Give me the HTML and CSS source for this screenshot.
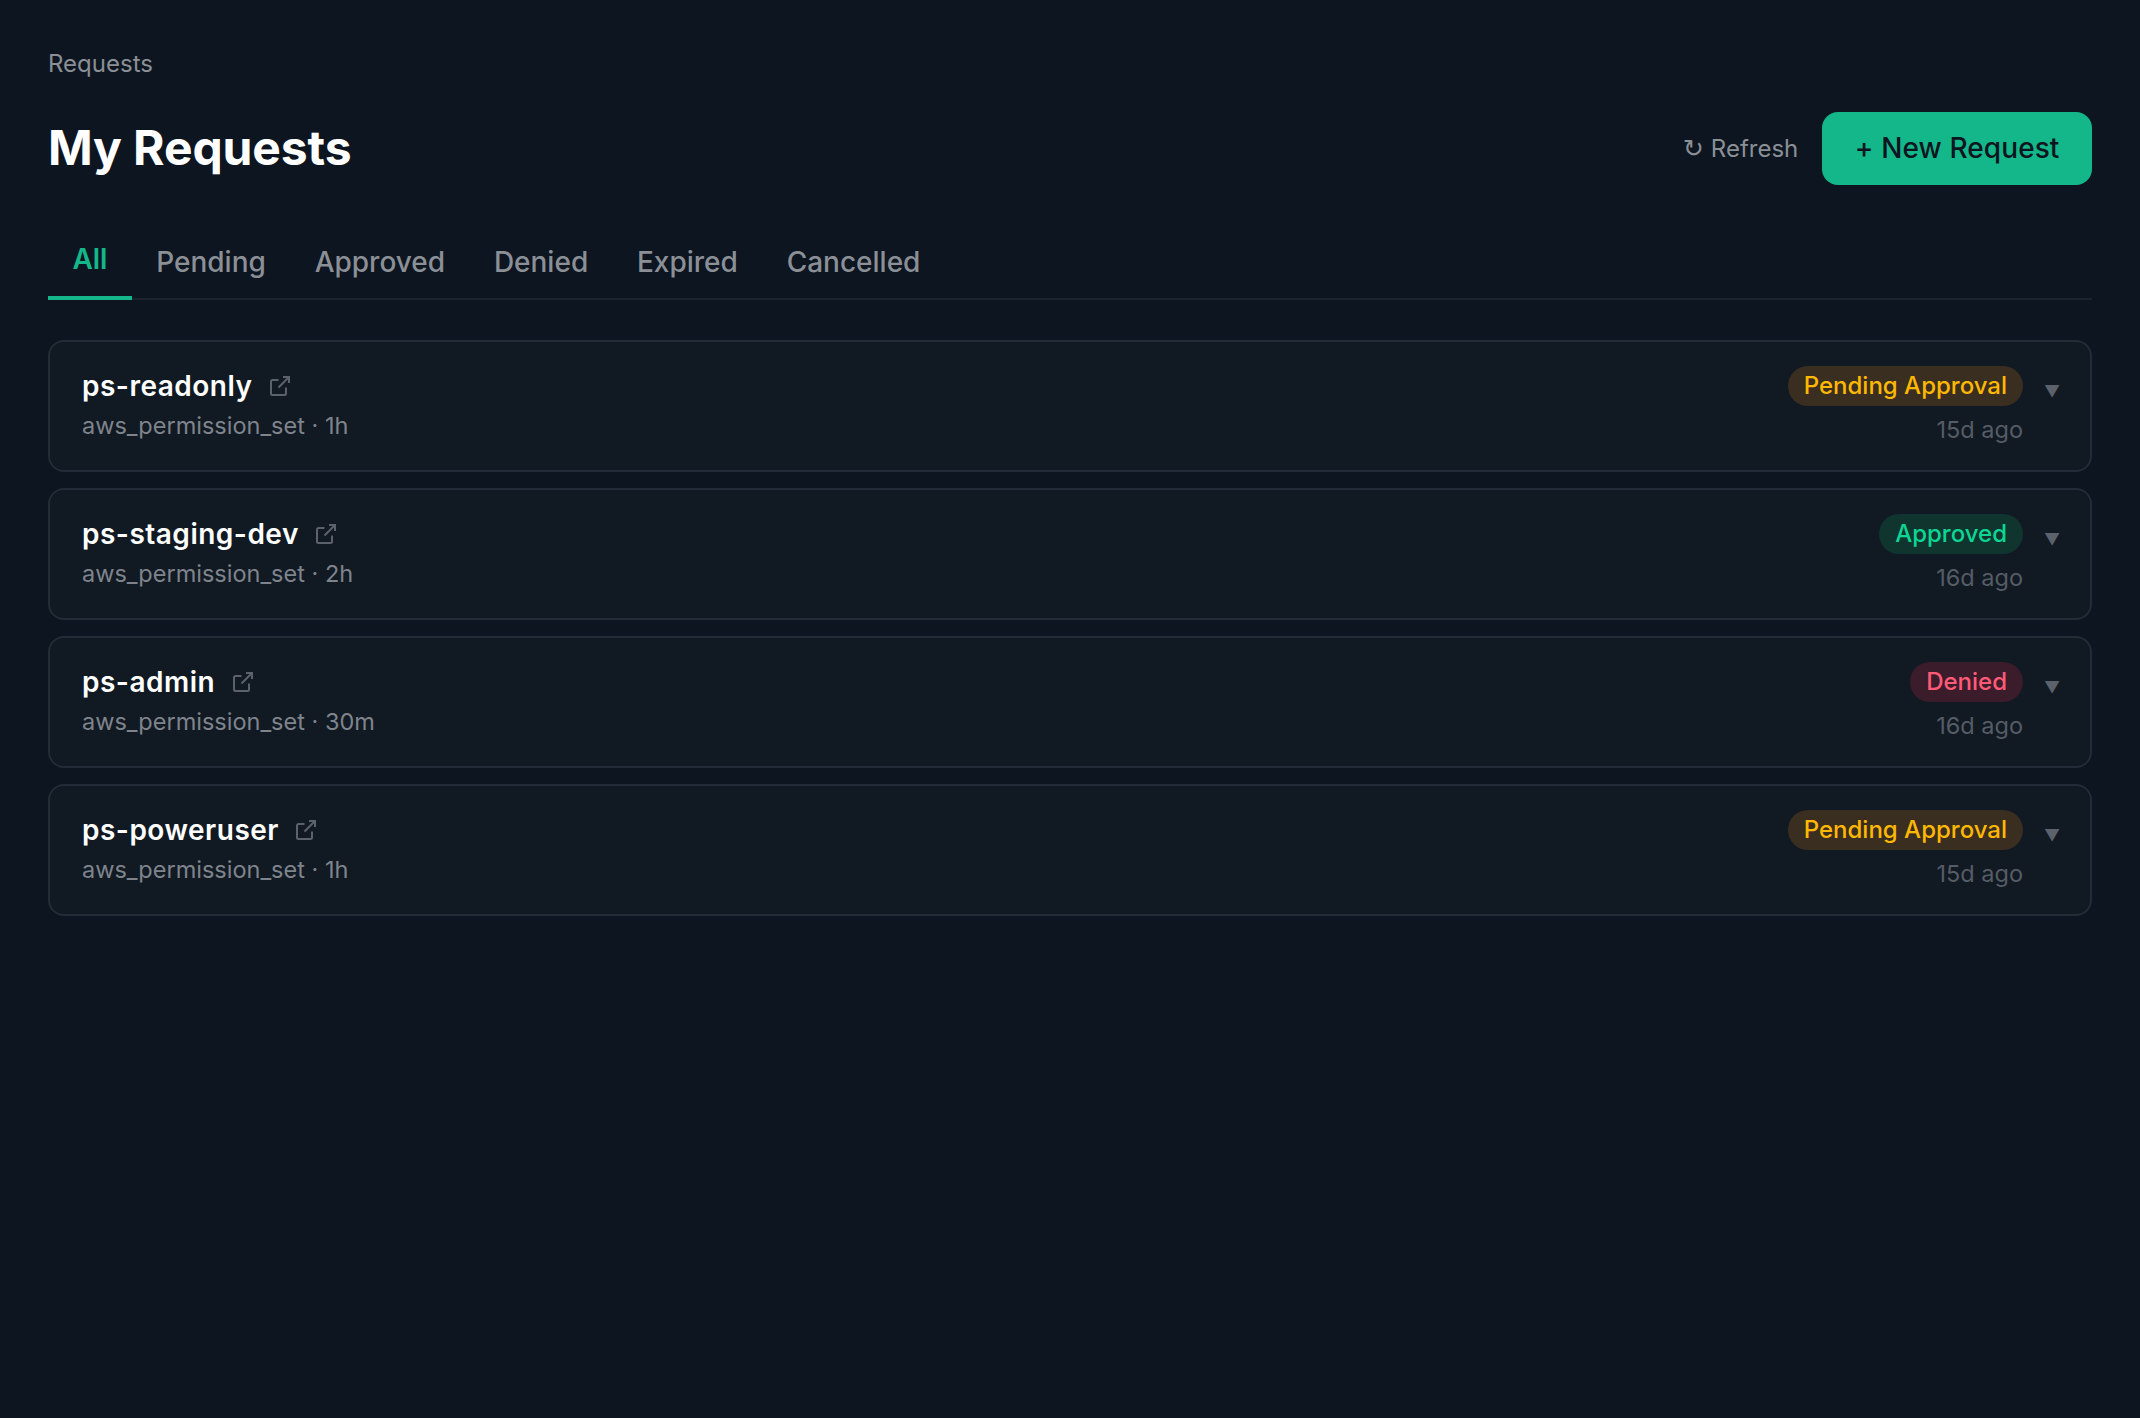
FILE: index.html
```html
<!DOCTYPE html>
<html>
<head>
<meta charset="utf-8" />
<title>My Requests</title>
<link rel="stylesheet" href="styles.css">
</head>
<body>
<div class="page">
    <div class="crumb">Requests</div>
    <div class="head">
        <h1>My Requests</h1>
        <div class="actions">
            <a class="refresh" href="#"><span class="spin">↻</span> Refresh</a>
            <a class="new" href="#">+ New Request</a>
        </div>
    </div>
    <div class="tabs">
        <a class="tab active" href="#">All</a>
        <a class="tab" href="#">Pending</a>
        <a class="tab" href="#">Approved</a>
        <a class="tab" href="#">Denied</a>
        <a class="tab" href="#">Expired</a>
        <a class="tab" href="#">Cancelled</a>
    </div>
    <div class="list">
        <div class="card">
            <div class="info">
                <div class="name">ps-readonly <svg class="ext" viewBox="0 0 24 24"><path d="M18 13.5v6a1.5 1.5 0 0 1-1.5 1.500h-12A1.500 1.500 0 0 1 3 19.500v-12A1.500 1.500 0 0 1 4.500 6h6M15 3h6v6M10.500 13.500 21 3"/></svg></div>
                <div class="meta">aws_permission_set · 1h</div>
            </div>
            <div class="state">
                <span class="badge pending">Pending Approval</span>
                <span class="age">15d ago</span>
            </div>
            <span class="caret">▼</span>
        </div>
        <div class="card">
            <div class="info">
                <div class="name">ps-staging-dev <svg class="ext" viewBox="0 0 24 24"><path d="M18 13.5v6a1.5 1.5 0 0 1-1.5 1.500h-12A1.500 1.500 0 0 1 3 19.500v-12A1.500 1.500 0 0 1 4.500 6h6M15 3h6v6M10.500 13.500 21 3"/></svg></div>
                <div class="meta">aws_permission_set · 2h</div>
            </div>
            <div class="state">
                <span class="badge approved">Approved</span>
                <span class="age">16d ago</span>
            </div>
            <span class="caret">▼</span>
        </div>
        <div class="card">
            <div class="info">
                <div class="name">ps-admin <svg class="ext" viewBox="0 0 24 24"><path d="M18 13.5v6a1.5 1.5 0 0 1-1.5 1.500h-12A1.500 1.500 0 0 1 3 19.500v-12A1.500 1.500 0 0 1 4.500 6h6M15 3h6v6M10.500 13.500 21 3"/></svg></div>
                <div class="meta">aws_permission_set · 30m</div>
            </div>
            <div class="state">
                <span class="badge denied">Denied</span>
                <span class="age">16d ago</span>
            </div>
            <span class="caret">▼</span>
        </div>
        <div class="card">
            <div class="info">
                <div class="name">ps-poweruser <svg class="ext" viewBox="0 0 24 24"><path d="M18 13.5v6a1.5 1.5 0 0 1-1.5 1.500h-12A1.500 1.500 0 0 1 3 19.500v-12A1.500 1.500 0 0 1 4.500 6h6M15 3h6v6M10.500 13.500 21 3"/></svg></div>
                <div class="meta">aws_permission_set · 1h</div>
            </div>
            <div class="state">
                <span class="badge pending">Pending Approval</span>
                <span class="age">15d ago</span>
            </div>
            <span class="caret">▼</span>
        </div>
    </div>
</div>
</body>
</html>
```

FILE: styles.css
```css
*{
	margin:0;
	padding:0;
	box-sizing:border-box;
}
body{
	background-color:#0D1520;
	font-family:"Inter","Liberation Sans",sans-serif;
	color:#fff;
}
a{
	text-decoration:none;
}
.page{
	padding:48px 48px 0;
}
.crumb{
	font-size:24px;
	line-height:32px;
	color:#8B8F96;
}
.head{
	display:flex;
	justify-content:space-between;
	align-items:center;
	margin-top:32px;
}
h1{
	padding-bottom:2px;
	font-size:48px;
	font-weight:700;
	line-height:58px;
	letter-spacing:-0.12px;
}
.actions{
	display:flex;
	align-items:center;
	gap:24px;
}
.refresh{
	font-size:24px;
	color:#8B8F96;
}
.spin{
	font-family:"DejaVu Sans",sans-serif;
	font-size:25px;
}
.new{
	display:block;
	height:73px;
	line-height:73px;
	padding:0 32.500px;
	border-radius:16px;
	background-color:#14B789;
	color:#0D1520;
	font-size:28px;
	font-weight:500;
	letter-spacing:0.1px;
}
.tabs{
	display:flex;
	align-items:flex-start;
	margin-top:39px;
	border-bottom:2px solid #1C2430;
	height:76px;
}
.tab{
	padding:19px 24.400px 0;
	font-size:28px;
	line-height:38px;
	font-weight:500;
	color:#8B8F96;
}
.tab.active{
	height:76px;
	padding:16px 24.400px 0;
	font-weight:600;
	color:#14B789;
	border-bottom:4px solid #14B789;
}
.list{
	margin-top:40px;
	display:flex;
	flex-direction:column;
	gap:16px;
}
.card{
	display:flex;
	align-items:flex-start;
	height:132px;
	padding:24px 26px 24px 32px;
	border:2px solid #232B37;
	border-radius:16px;
	background-color:#111923;
}
.info{
	flex:1;
}
.name{
	font-size:28px;
	line-height:41px;
	font-weight:600;
	letter-spacing:0.5px;
}
.ext{
	width:24px;
	height:24px;
	margin-left:8px;
	vertical-align:-2px;
	fill:none;
	stroke:#5C626B;
	stroke-width:2;
}
.meta{
	margin-top:3px;
	font-size:23.5px;
	line-height:32px;
	color:#7F848C;
}
.state{
	display:flex;
	flex-direction:column;
	align-items:flex-end;
}
.badge{
	height:40px;
	line-height:40px;
	padding:0 16px;
	border-radius:20px;
	font-size:24px;
	font-weight:500;
}
.pending{
	color:#FFB800;
	background-color:#3A2E20;
}
.approved{
	color:#0BD694;
	background-color:#10352F;
}
.denied{
	color:#FF5A78;
	background-color:#3A1C2B;
}
.age{
	margin-top:8px;
	font-size:23.5px;
	line-height:32px;
	color:#565C65;
}
.caret{
	width:20px;
	margin-left:21px;
	margin-top:13px;
	font-size:16px;
	line-height:24px;
	color:#5C626B;
}
```
